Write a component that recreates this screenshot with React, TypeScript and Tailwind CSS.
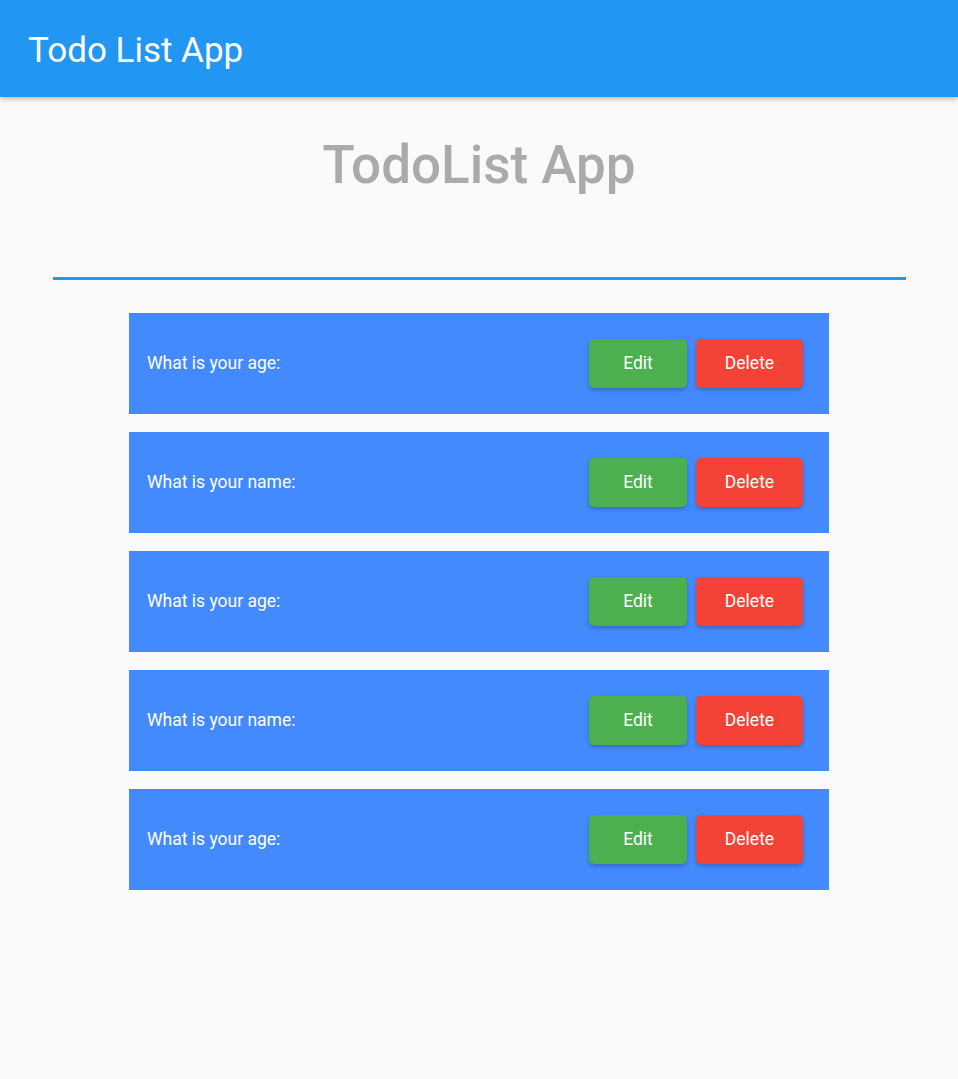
import { useState } from "react";

type Todo = {
  id: number;
  text: string;
};

const initialTodos: Todo[] = [
  { id: 1, text: "What is your age:" },
  { id: 2, text: "What is your name:" },
  { id: 3, text: "What is your age:" },
  { id: 4, text: "What is your name:" },
  { id: 5, text: "What is your age:" },
];

export default function App() {
  const [todos, setTodos] = useState<Todo[]>(initialTodos);
  const [value, setValue] = useState("");

  const handleDelete = (id: number) => {
    setTodos((prev) => prev.filter((t) => t.id !== id));
  };

  return (
    <div className="min-h-[1079px] bg-[#fafafa] font-['Roboto','Liberation_Sans',sans-serif]">
      <header className="flex h-[97px] items-center bg-[#2196f3] px-[28px] pt-[3px] shadow-[0_2px_5px_rgba(0,0,0,0.26)]">
        <h1 className="text-[35px] leading-none text-white">Todo List App</h1>
      </header>

      <main className="flex flex-col items-center">
        <h2 className="mt-[36px] text-[53px] font-medium leading-[64px] text-[#aaaaaa]">
          TodoList App
        </h2>

        <input
          value={value}
          onChange={(event) => setValue(event.target.value)}
          className="mt-[63px] h-[20px] w-[853px] border-b-[3px] border-solid border-[#2196f3] bg-transparent text-[16px] outline-none"
        />

        <ul className="mt-[33px] flex w-[700px] flex-col gap-[18px]">
          {todos.map((todo) => (
            <li
              key={todo.id}
              className="flex h-[101px] items-center justify-between bg-[#448aff] pl-[18px] pr-[26px]"
            >
              <span className="text-[17.5px] text-white">{todo.text}</span>
              <div className="flex gap-[9px]">
                <button className="h-[49px] w-[98px] rounded-[5px] bg-[#4caf50] text-[17.5px] text-white shadow-[0_2px_4px_rgba(0,0,0,0.25)]">
                  Edit
                </button>
                <button
                  onClick={() => handleDelete(todo.id)}
                  className="h-[49px] w-[107px] rounded-[5px] bg-[#f44336] text-[17.5px] text-white shadow-[0_2px_4px_rgba(0,0,0,0.25)]"
                >
                  Delete
                </button>
              </div>
            </li>
          ))}
        </ul>
      </main>
    </div>
  );
}
